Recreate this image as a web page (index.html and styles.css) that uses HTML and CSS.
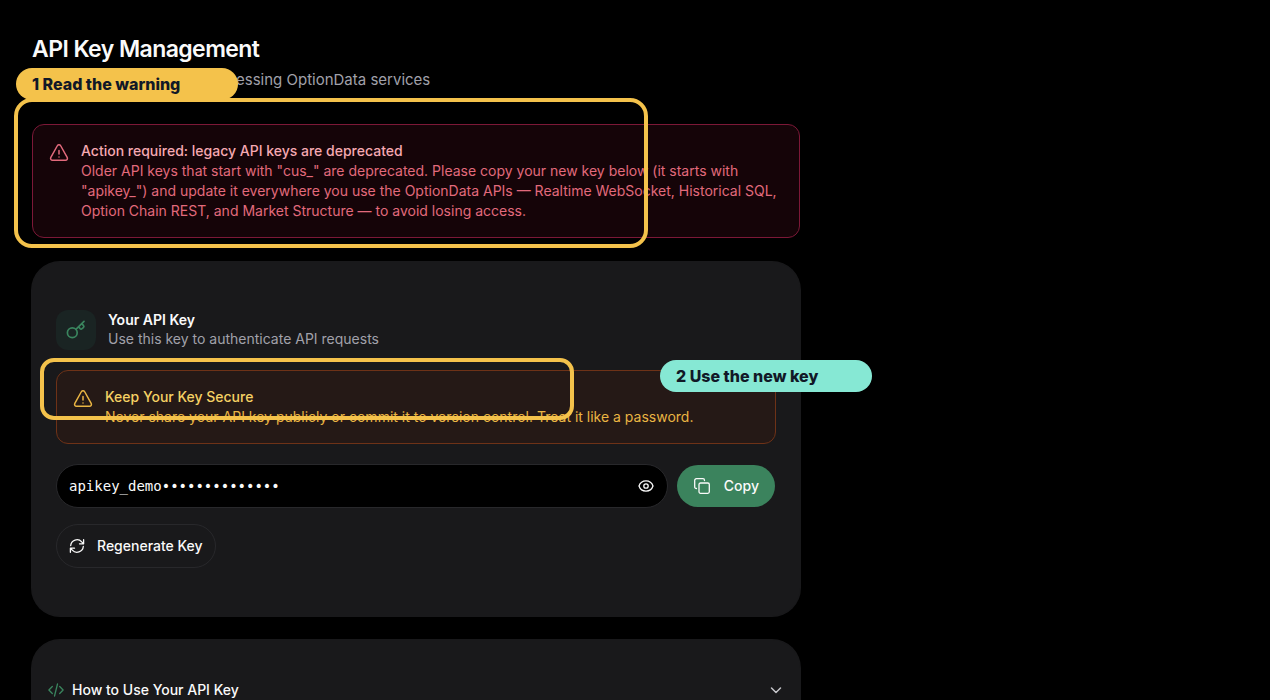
FILE: index.html
```html
<!DOCTYPE html>
<html lang="en">
<head>
<meta charset="utf-8">
<meta name="viewport" content="width=device-width, initial-scale=1">
<title>API Key Management</title>
<link rel="stylesheet" href="styles.css">
</head>
<body>
<main class="page">
  <header class="page-header">
    <h1 class="page-title">API Key Management</h1>
    <p class="page-subtitle">Manage your API key for accessing OptionData services</p>
  </header>

  <section class="alert alert-danger">
    <svg class="alert-icon" viewBox="0 0 24 24" aria-hidden="true"><path d="M12 9v4.300M12 16.800v.1M2.200 17.200c-.9 1.600.2 3.600 2 3.600h15.600c1.800 0 2.900-2 2-3.600L14 3.300c-.9-1.600-3.100-1.600-4 0Z"/></svg>
    <div class="alert-body">
      <h2 class="alert-title">Action required: legacy API keys are deprecated</h2>
      <p class="alert-text">Older API keys that start with "cus_" are deprecated. Please copy your new key below (it starts with "apikey_") and update it everywhere you use the OptionData APIs — Realtime WebSocket, Historical SQL, Option Chain REST, and Market Structure — to avoid losing access.</p>
    </div>
  </section>

  <section class="card">
    <div class="card-header">
      <span class="key-badge">
        <svg class="icon-key" viewBox="0 0 20 20" aria-hidden="true"><circle cx="6.300" cy="12.800" r="4.900"/><path d="M9.900 9.300 18 1.300M12.700 6.800l1.300 1.700c.6.700 1.400.8 2.100.2l1.200-1c.7-.6.800-1.400.2-2.100L16 3.800"/></svg>
      </span>
      <div>
        <h2 class="card-title">Your API Key</h2>
        <p class="card-text">Use this key to authenticate API requests</p>
      </div>
    </div>

    <div class="alert alert-warning">
      <svg class="alert-icon" viewBox="0 0 24 24" aria-hidden="true"><path d="M12 9v4.300M12 16.800v.1M2.200 17.200c-.9 1.600.2 3.600 2 3.600h15.600c1.800 0 2.900-2 2-3.600L14 3.300c-.9-1.600-3.100-1.600-4 0Z"/></svg>
      <div class="alert-body">
        <h3 class="alert-title">Keep Your Key Secure</h3>
        <p class="alert-text">Never share your API key publicly or commit it to version control. Treat it like a password.</p>
      </div>
    </div>

    <div class="key-row">
      <div class="key-field">
        <input class="key-input" type="text" aria-label="API key" value="apikey_demo••••••••••••••" readonly>
        <button class="reveal" type="button" aria-label="Show API key">
          <svg class="icon-16" viewBox="0 0 16 16" aria-hidden="true"><path d="M1 8c1.100-3.200 3.800-5.100 7-5.100S13.900 4.800 15 8c-1.100 3.200-3.800 5.100-7 5.100S2.100 11.200 1 8Z"/><circle cx="8" cy="8" r="2.200"/></svg>
        </button>
      </div>
      <button class="btn btn-primary" type="button">
        <svg class="icon-16" viewBox="0 0 16 16" aria-hidden="true"><rect x="5" y="5" width="10.300" height="10.300" rx="1.500"/><path d="M2.500 10.500c-1 0-1.800-.6-1.800-1.600V2.400C.7 1.400 1.400.7 2.400.7h6.500c1 0 1.600.8 1.600 1.800"/></svg>
        Copy
      </button>
    </div>

    <button class="btn btn-outline" type="button">
      <svg class="icon-16" viewBox="0 0 16 16" aria-hidden="true"><path d="M1.700 7.500A6.300 6.300 0 0 1 12.700 3.900L14.600 5.800M14.600 1.700v4.100h-4.100M14.300 8.500A6.300 6.300 0 0 1 3.300 12.100L1.400 10.200M1.400 14.300v-4.100h4.100"/></svg>
      Regenerate Key
    </button>
  </section>

  <section class="card card-guide">
    <button class="guide-toggle" type="button" aria-expanded="false">
      <svg class="icon-code" viewBox="0 0 16 16" aria-hidden="true"><path d="M4.300 4.500.9 8l3.400 3.500M11.700 4.500 15.100 8l-3.400 3.500M9.500 2l-3 12"/></svg>
      <span class="guide-label">How to Use Your API Key</span>
      <svg class="icon-chevron" viewBox="0 0 16 16" aria-hidden="true"><path d="m3.500 6 4.500 4.500L12.500 6"/></svg>
    </button>
  </section>

  <div class="callout-frame frame-warning"></div>
  <div class="callout-frame frame-key"></div>
  <div class="callout-label label-warning">1 Read the warning</div>
  <div class="callout-label label-key">2 Use the new key</div>
</main>
</body>
</html>
```

FILE: styles.css
```css
* {
  box-sizing: border-box;
}

body {
  margin: 0;
  background: #000;
  color: #fafafa;
  font-family: Inter, "Liberation Sans", sans-serif;
  font-size: 14px;
  line-height: 20px;
}

h1, h2, h3, p {
  margin: 0;
}

svg {
  flex: none;
  fill: none;
  stroke: currentColor;
  stroke-linecap: round;
  stroke-linejoin: round;
}

button {
  font: inherit;
  color: inherit;
  cursor: pointer;
}

.page {
  position: relative;
  display: flex;
  flex-direction: column;
  gap: 24px;
  max-width: 832px;
  padding: 32px;
}

.page-header {
  margin-bottom: 8px;
}

.page-title {
  font-size: 23px;
  font-weight: 600;
  line-height: 34px;
  letter-spacing: -0.025em;
}

.page-subtitle {
  margin-top: 2px;
  color: #a1a1aa;
  font-size: 15px;
  line-height: 24px;
}

.alert {
  display: flex;
  gap: 12px;
  padding: 16px;
  border: 1px solid;
  border-radius: 12px;
}

.alert-icon {
  width: 20px;
  height: 20px;
  margin-top: 2px;
  stroke-width: 1.8;
}

.alert-title {
  font-size: 14px;
  font-weight: 500;
  line-height: 20px;
}

.alert-danger {
  background: #150408;
  border-color: #7c1837;
  color: #e26a7c;
}

.alert-danger .alert-title {
  color: #f5a9b2;
}

.alert-warning {
  margin-top: 20px;
  background: #251916;
  border-color: #6e3217;
  color: #eab543;
}

.alert-warning .alert-title {
  color: #f5d164;
}

.card {
  padding: 48px 24px;
  border-radius: 28px;
  background: #19191b;
  box-shadow: 0 0 0 1px #19191b;
}

.card-header {
  display: flex;
  align-items: center;
  gap: 12px;
}

.key-badge {
  display: grid;
  place-items: center;
  width: 40px;
  height: 40px;
  border-radius: 12px;
  background: #1a2423;
  color: #3a855e;
}

.icon-key {
  width: 20px;
  height: 20px;
  stroke-width: 1.7;
}

.card-title {
  font-size: 14px;
  font-weight: 600;
  line-height: 18px;
}

.card-text {
  color: #a1a1aa;
  line-height: 20px;
}

.key-row {
  display: flex;
  align-items: center;
  gap: 9px;
  margin-top: 20px;
}

.key-field {
  display: flex;
  flex: 1;
  align-items: center;
  height: 44px;
  padding: 0 13px 0 12px;
  border: 1px solid #28282b;
  border-radius: 22px;
  background: #000;
}

.key-input {
  flex: 1;
  min-width: 0;
  padding: 0;
  border: 0;
  outline: 0;
  background: transparent;
  color: #fafafa;
  font-family: "DejaVu Sans Mono", monospace;
  font-size: 14px;
  line-height: 20px;
}

.reveal {
  display: flex;
  padding: 0;
  border: 0;
  background: none;
}

.icon-16 {
  width: 16px;
  height: 16px;
  stroke-width: 1.3;
}

.btn {
  display: inline-flex;
  align-items: center;
  border-radius: 22px;
  font-weight: 500;
}

.btn-primary {
  gap: 14px;
  height: 42px;
  margin-right: 1px;
  padding: 0 16px 0 17px;
  border: 0;
  background: #3b835d;
}

.btn-outline {
  gap: 12px;
  height: 44px;
  margin-top: 16px;
  padding: 0 12px;
  border: 1px solid #28282b;
  background: transparent;
}

.card-guide {
  padding: 40px 16px;
}

.guide-toggle {
  display: flex;
  align-items: center;
  gap: 8px;
  width: 100%;
  padding: 0;
  border: 0;
  background: none;
  text-align: left;
}

.guide-label {
  flex: 1;
  font-weight: 500;
}

.icon-code {
  width: 16px;
  height: 16px;
  stroke-width: 1.3;
  color: #3a855e;
}

.icon-chevron {
  width: 16px;
  height: 16px;
  stroke-width: 1.5;
  color: #c4c4c9;
}

.callout-frame {
  position: absolute;
  border: 4px solid #f4c24b;
  pointer-events: none;
}

.frame-warning {
  top: 98px;
  left: 14px;
  width: 634px;
  height: 150px;
  border-radius: 18px;
}

.frame-key {
  top: 358px;
  left: 40px;
  width: 534px;
  height: 62px;
  border-radius: 14px;
}

.callout-label {
  position: absolute;
  padding: 4px 16px;
  border-radius: 16px;
  color: #111827;
  font-size: 16px;
  font-weight: 800;
  line-height: 24px;
}

.label-warning {
  top: 68px;
  left: 16px;
  width: 222px;
  background: #f4c24b;
}

.label-key {
  top: 360px;
  left: 660px;
  width: 212px;
  background: #86e8d4;
}
```
